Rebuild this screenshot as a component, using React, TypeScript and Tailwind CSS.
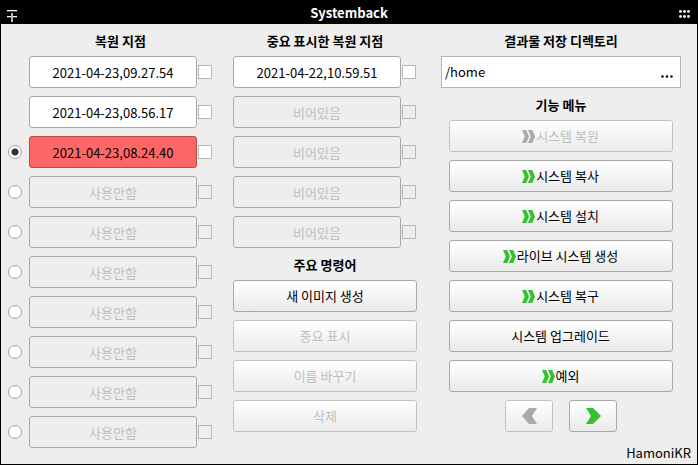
import { useState } from "react";

type Point = { name: string; state: "normal" | "excess" | "empty" };

const restorePoints: Point[] = [
  { name: "2021-04-23,09.27.54", state: "normal" },
  { name: "2021-04-23,08.56.17", state: "normal" },
  { name: "2021-04-23,08.24.40", state: "excess" },
  ...Array.from({ length: 7 }, () => ({ name: "사용안함", state: "empty" as const })),
];

const highlightedPoints: Point[] = [
  { name: "2021-04-22,10.59.51", state: "normal" },
  ...Array.from({ length: 4 }, () => ({ name: "비어있음", state: "empty" as const })),
];

const commands = [
  { label: "새 이미지 생성", disabled: false },
  { label: "중요 표시", disabled: true },
  { label: "이름 바꾸기", disabled: true },
  { label: "삭제", disabled: true },
];

const functions = [
  { label: "시스템 복원", arrow: true, disabled: true },
  { label: "시스템 복사", arrow: true, disabled: false },
  { label: "시스템 설치", arrow: true, disabled: false },
  { label: "라이브 시스템 생성", arrow: true, disabled: false },
  { label: "시스템 복구", arrow: true, disabled: false },
  { label: "시스템 업그레이드", arrow: false, disabled: false },
  { label: "예외", arrow: true, disabled: false },
];

const fieldStyles = {
  normal: "border-[#a8a8a8] bg-white text-black",
  excess: "border-[#b94a4a] bg-[#ff6666] text-black",
  empty: "border-[#a8a8a8] bg-[#eeeeee] text-[#bebebe]",
};

const buttonStyle =
  "flex h-8 items-center justify-center rounded-[3px] border border-[#a8a8a8] bg-linear-to-b from-white to-[#ebebeb] text-black disabled:border-[#c2c2c2] disabled:text-[#bebebe]";

function Heading({ children }: { children: string }) {
  return <h2 className="flex h-8 items-center justify-center pt-0.5 font-bold">{children}</h2>;
}

function DoubleChevron({ disabled }: { disabled: boolean }) {
  return (
    <svg width="14" height="13" viewBox="0 0 14 13" fill={disabled ? "#aaaaaa" : "#33c033"} aria-hidden="true">
      <path d="M0 0h4.2l2.8 6.5L4.2 13H0l2.8-6.5z" />
      <path d="M6 0h4.2l2.8 6.5-2.8 6.5H6l2.8-6.5z" />
    </svg>
  );
}

function PointField({ point, label }: { point: Point; label: string }) {
  const empty = point.state === "empty";
  return (
    <>
      <input
        type="text"
        aria-label={label}
        defaultValue={point.name}
        disabled={empty}
        className={`h-8 min-w-0 flex-1 rounded-[3px] border px-1 text-center ${fieldStyles[point.state]}`}
      />
      <input
        type="checkbox"
        aria-label={`${label} 선택`}
        disabled={empty}
        className="ml-px size-3.5 shrink-0 appearance-none border border-[#b8b8b8] bg-white checked:bg-[#33c033] disabled:bg-transparent"
      />
    </>
  );
}

export default function App() {
  const [limit, setLimit] = useState(2);

  return (
    <div className="flex min-h-screen flex-col border-x border-b border-black bg-[#eeeeee] font-['Noto_Sans_CJK_KR','Noto_Sans',sans-serif] text-[13px] leading-5 text-black">
      <header className="grid h-6 grid-cols-[1fr_auto_1fr] items-center bg-black px-1.5 text-white">
        <button type="button" aria-label="최소화" className="justify-self-start pt-1.5">
          <svg width="10" height="14" viewBox="0 0 10 14" fill="#ffffff" aria-hidden="true">
            <rect y="2" width="10" height="1.3" />
            <rect y="8" width="10" height="1.3" />
            <rect x="4" y="5" width="2" height="9" fill="#bbbbbb" />
          </svg>
        </button>
        <h1 className="pt-0.5 font-bold">Systemback</h1>
        <button type="button" aria-label="메뉴" className="justify-self-end pt-1">
          <svg width="12" height="8" viewBox="0 0 12 8" fill="#ffffff" aria-hidden="true">
            <circle cx="1.5" cy="1.5" r="1.4" />
            <circle cx="5.5" cy="1.5" r="1.4" />
            <circle cx="9.5" cy="1.5" r="1.4" />
            <circle cx="1.5" cy="6.5" r="1.4" />
            <circle cx="5.5" cy="6.5" r="1.4" />
            <circle cx="9.5" cy="6.5" r="1.4" />
          </svg>
        </button>
      </header>

      <main className="grid flex-1 grid-cols-[204fr_184fr_253fr] gap-x-[21px] pr-1.5 pl-[7px]">
        <section>
          <div className="pl-[21px]">
            <Heading>복원 지점</Heading>
          </div>
          <ul className="flex flex-col gap-2">
            {restorePoints.map((point, i) => (
              <li key={i} className="flex items-center">
                <span className="flex w-[21px] shrink-0">
                  {i >= 2 && (
                    <input
                      type="radio"
                      name="limit"
                      aria-label={`복원 지점 ${i + 1}개 유지`}
                      checked={limit === i}
                      onChange={() => setLimit(i)}
                      className="size-3.5 appearance-none rounded-full border border-[#a0a0a0] bg-white checked:bg-radial checked:from-[#333333] checked:from-[3px] checked:to-white checked:to-[4px]"
                    />
                  )}
                </span>
                <PointField point={point} label={`복원 지점 ${i + 1}`} />
              </li>
            ))}
          </ul>
        </section>

        <section>
          <Heading>중요 표시한 복원 지점</Heading>
          <ul className="flex flex-col gap-2 pr-px">
            {highlightedPoints.map((point, i) => (
              <li key={i} className="flex items-center">
                <PointField point={point} label={`중요 복원 지점 ${i + 1}`} />
              </li>
            ))}
          </ul>
          <Heading>주요 명령어</Heading>
          <div className="flex flex-col gap-2">
            {commands.map(({ label, disabled }) => (
              <button key={label} type="button" disabled={disabled} className={buttonStyle}>
                {label}
              </button>
            ))}
          </div>
        </section>

        <section className="flex flex-col pl-[3px]">
          <div className="pr-2.5">
            <Heading>결과물 저장 디렉토리</Heading>
            <div className="flex h-8 border border-[#b4b4b4] bg-white">
              <input
                type="text"
                aria-label="결과물 저장 디렉토리"
                defaultValue="/home"
                className="min-w-0 flex-1 pl-[3px]"
              />
              <button type="button" aria-label="디렉토리 선택" className="px-[7px] pt-2">
                <svg width="12" height="3" viewBox="0 0 12 3" aria-hidden="true">
                  <circle cx="1.5" cy="1.5" r="1.2" />
                  <circle cx="6" cy="1.5" r="1.2" />
                  <circle cx="10.5" cy="1.5" r="1.2" />
                </svg>
              </button>
            </div>
            <Heading>기능 메뉴</Heading>
            <div className="flex flex-col gap-2 px-2">
              {functions.map(({ label, arrow, disabled }) => (
                <button key={label} type="button" disabled={disabled} className={`pr-px ${buttonStyle}`}>
                  {arrow && <DoubleChevron disabled={disabled} />}
                  <span>{label}</span>
                </button>
              ))}
              <div className="flex justify-center gap-4">
                <button type="button" disabled aria-label="이전" className={`w-12 ${buttonStyle}`}>
                  <svg width="16" height="16" viewBox="0 0 16 16" fill="#aaaaaa" aria-hidden="true">
                    <path d="M8 0h8l-5 8 5 8H8L1 8z" />
                  </svg>
                </button>
                <button type="button" aria-label="다음" className={`w-12 ${buttonStyle}`}>
                  <svg width="16" height="16" viewBox="0 0 16 16" fill="#33c033" aria-hidden="true">
                    <path d="M1 0h7l8 8-8 8H1l5-8z" />
                  </svg>
                </button>
              </div>
            </div>
          </div>
          <p className="mt-auto self-end pb-px">HamoniKR</p>
        </section>
      </main>
    </div>
  );
}
